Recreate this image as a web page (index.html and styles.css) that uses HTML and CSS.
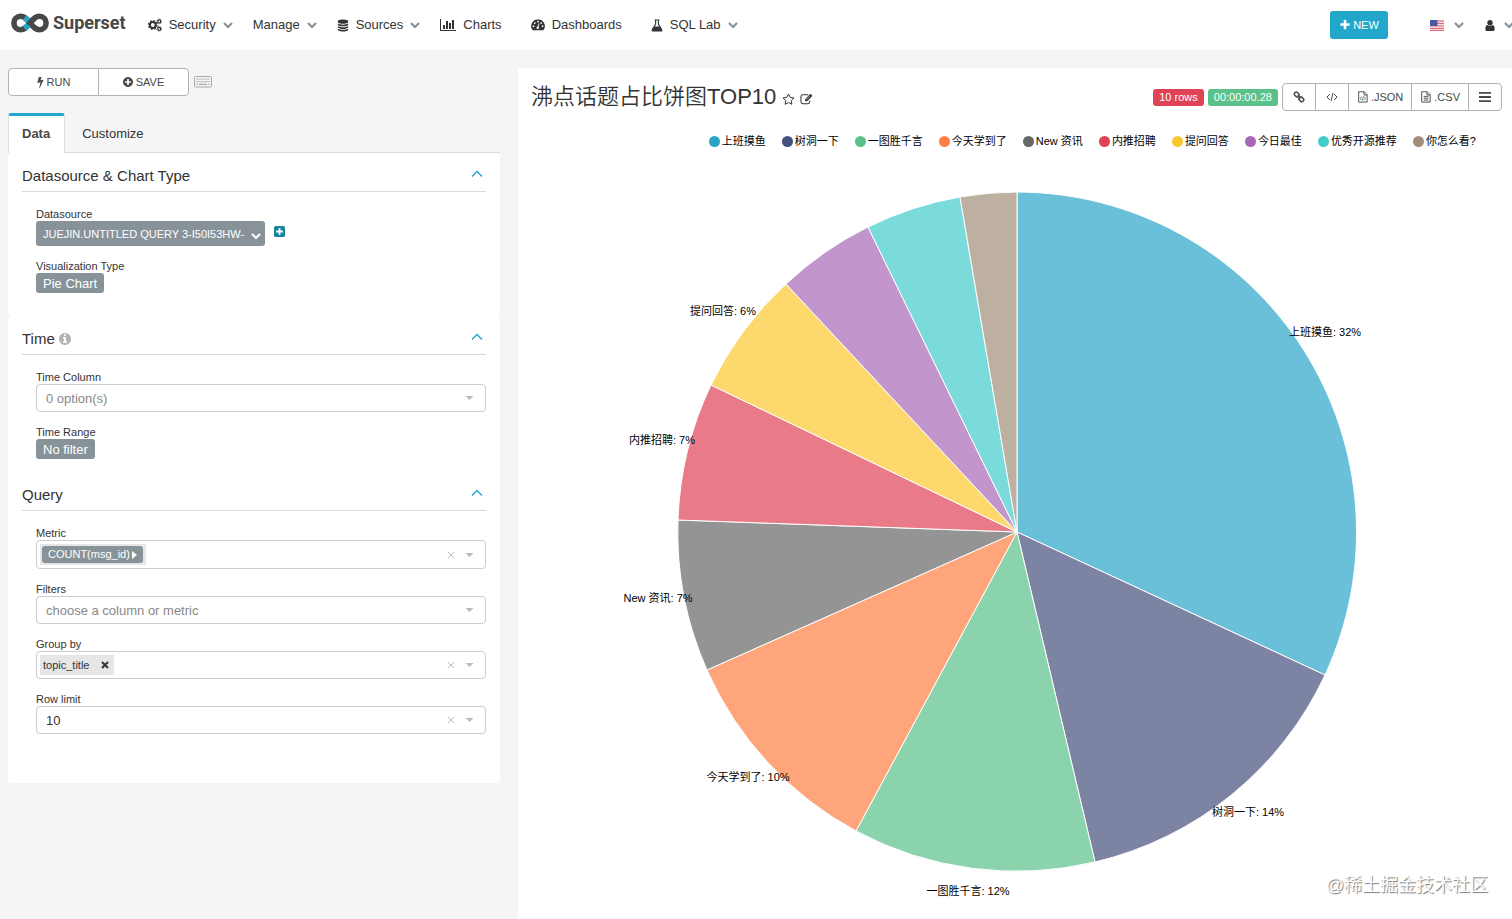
FILE: index.html
```html
<!DOCTYPE html>
<html lang="en">
<head>
  <meta charset="UTF-8" />
  <meta name="viewport" content="width=device-width, initial-scale=1.0" />
  <title>沸点话题占比饼图TOP10 - Superset</title>
  <link rel="stylesheet" href="styles.css">
</head>
<body>
  <!-- icon sprite -->
  <svg class="sprite" aria-hidden="true">
    <symbol id="chevron-down" viewBox="0 0 10 8"><path d="M1 2L5 6L9 2" fill="none" stroke="currentColor" stroke-width="2.2"/></symbol>
    <symbol id="chevron-up" viewBox="0 0 12 8"><path d="M1 6.5L6 1.5L11 6.5" fill="none" stroke="currentColor" stroke-width="1.4"/></symbol>
    <symbol id="caret" viewBox="0 0 8 4"><path d="M0 0H8L4 4Z"/></symbol>
    <symbol id="clear" viewBox="0 0 8 8"><path d="M1 1L7 7M7 1L1 7" fill="none" stroke="currentColor"/></symbol>
    <symbol id="database" viewBox="0 0 1792 1792"><path d="M896 768q237 0 443-43t325-127v170q0 69-103 128t-280 93.5-385 34.5-385-34.5-280-93.5-103-128v-170q119 84 325 127t443 43zm0 768q237 0 443-43t325-127v170q0 69-103 128t-280 93.5-385 34.5-385-34.5-280-93.5-103-128v-170q119 84 325 127t443 43zm0-384q237 0 443-43t325-127v170q0 69-103 128t-280 93.5-385 34.5-385-34.5-280-93.5-103-128v-170q119 84 325 127t443 43zm0-1152q208 0 385 34.5t280 93.5 103 128v128q0 69-103 128t-280 93.5-385 34.5-385-34.5-280-93.5-103-128v-128q0-69 103-128t280-93.5 385-34.5z"/></symbol>
    <symbol id="bar-chart" viewBox="0 0 2048 1792"><path d="M640 896v512h-256v-512h256zm384-512v1024h-256v-1024h256zm1024 1152v128h-2048v-1536h128v1408h1920zm-640-896v768h-256v-768h256zm384-384v1152h-256v-1152h256z"/></symbol>
    <symbol id="cogs" viewBox="0 0 14 14">
      <g fill="none" stroke="currentColor">
        <circle cx="4.8" cy="7" r="2.9" stroke-width="2"/>
        <circle cx="4.8" cy="7" r="4.3" stroke-width="1.3" stroke-dasharray="1.7 1.68"/>
        <circle cx="11.2" cy="3.4" r="1.5" stroke-width="1.2"/>
        <circle cx="11.2" cy="3.4" r="2.4" stroke-width="0.9" stroke-dasharray="1 0.88"/>
        <circle cx="11.2" cy="10.8" r="1.5" stroke-width="1.2"/>
        <circle cx="11.2" cy="10.8" r="2.4" stroke-width="0.9" stroke-dasharray="1 0.88"/>
      </g>
    </symbol>
    <symbol id="dashboard" viewBox="0 0 14 12">
      <path d="M7 0.5A6.6 6.6 0 0 0 1.3 10.8Q1.5 11.2 2 11.2H12Q12.5 11.2 12.7 10.8A6.6 6.6 0 0 0 7 0.5Z"/>
      <g fill="#fff"><circle cx="2.5" cy="7.2" r="0.9"/><circle cx="3.8" cy="4.1" r="0.9"/><circle cx="7" cy="2.7" r="0.9"/><circle cx="10.2" cy="4.1" r="0.9"/><circle cx="11.5" cy="7.2" r="0.9"/><circle cx="6.8" cy="8.7" r="1.3"/></g>
      <path d="M6.9 8.5L8 4.5" stroke="#fff" stroke-width="0.9"/>
    </symbol>
    <symbol id="flask" viewBox="0 0 12 13">
      <path d="M3.5 1H8.5M4.6 1V5L1.3 10.6Q0.7 12 2 12H10Q11.3 12 10.7 10.6L7.4 5V1" fill="none" stroke="currentColor" stroke-width="1.1"/>
      <path d="M3.4 7.5H8.6L11 12H1Z"/>
    </symbol>
    <symbol id="plus" viewBox="0 0 1792 1792"><path d="M1600 736v192q0 40-28 68t-68 28h-416v416q0 40-28 68t-68 28h-192q-40 0-68-28t-28-68v-416h-416q-40 0-68-28t-28-68v-192q0-40 28-68t68-28h416v-416q0-40 28-68t68-28h192q40 0 68 28t28 68v416h416q40 0 68 28t28 68z"/></symbol>
    <symbol id="user" viewBox="128 0 1536 1792"><path d="M1536 1399q0 109-62.5 187t-150.5 78h-854q-88 0-150.5-78t-62.5-187q0-85 8.5-160.5t31.5-152 58.5-131 94-89 134.5-34.5q131 128 313 128t313-128q76 0 134.5 34.5t94 89 58.5 131 31.5 152 8.5 160.5zm-256-887q0 159-112.5 271.5t-271.5 112.5-271.5-112.5-112.5-271.5 112.5-271.5 271.5-112.5 271.5 112.5 112.5 271.5z"/></symbol>
    <symbol id="bolt" viewBox="400 160 1000 1620"><path d="M1333 566q18 20 7 44l-540 1157q-13 25-42 25-4 0-14-2-17-5-25.5-19t-4.5-30l197-808-406 101q-4 1-12 1-18 0-31-11-18-15-13-39l201-825q4-14 16-23t28-9h328q19 0 32 12.5t13 29.5q0 8-5 18l-171 463 396-98q8-2 12-2 19 0 34 15z"/></symbol>
    <symbol id="plus-circle" viewBox="128 128 1536 1536"><path d="M1344 960v-128q0-26-19-45t-45-19h-256v-256q0-26-19-45t-45-19h-128q-26 0-45 19t-19 45v256h-256q-26 0-45 19t-19 45v128q0 26 19 45t45 19h256v256q0 26 19 45t45 19h128q26 0 45-19t19-45v-256h256q26 0 45-19t19-45zm320-64q0 209-103 385.5t-279.5 279.5-385.5 103-385.5-103-279.5-279.5-103-385.5 103-385.5 279.5-279.5 385.5-103 385.5 103 279.5 279.5 103 385.5z"/></symbol>
    <symbol id="info-circle" viewBox="128 128 1536 1536"><path d="M1152 1376v-160q0-14-9-23t-23-9h-96v-512q0-14-9-23t-23-9h-320q-14 0-23 9t-9 23v160q0 14 9 23t23 9h96v320h-96q-14 0-23 9t-9 23v160q0 14 9 23t23 9h448q14 0 23-9t9-23zm-128-896v-160q0-14-9-23t-23-9h-192q-14 0-23 9t-9 23v160q0 14 9 23t23 9h192q14 0 23-9t9-23zm640 416q0 209-103 385.5t-279.5 279.5-385.5 103-385.5-103-279.5-279.5-103-385.5 103-385.5 279.5-279.5 385.5-103 385.5 103 279.5 279.5 103 385.5z"/></symbol>
    <symbol id="keyboard" viewBox="0 0 18 12">
      <rect x="0.5" y="0.5" width="17" height="10.5" rx="1" fill="none" stroke="currentColor"/>
      <path d="M2.5 3.2H15.5M2.5 5.7H15.5" stroke="currentColor" stroke-width="1.2" stroke-dasharray="1.2 0.77"/>
      <path d="M2.5 8.3H3.7M5 8.3H13M14.3 8.3H15.5" stroke="currentColor" stroke-width="1.2"/>
    </symbol>
    <symbol id="star-o" viewBox="0 0 13 12"><path d="M6.5 1L8.2 4.4L12 5L9.2 7.6L9.9 11.3L6.5 9.5L3.1 11.3L3.8 7.6L1 5L4.8 4.4Z" fill="none" stroke="currentColor" stroke-linejoin="round"/></symbol>
    <symbol id="edit" viewBox="0 0 14 12">
      <path d="M9 1.5H3Q1 1.5 1 3.5V9Q1 11 3 11H8.5Q10.5 11 10.5 9V7.5" fill="none" stroke="currentColor" stroke-width="1.1"/>
      <path d="M5.5 8.5V6.2L10.8 0.9Q11.3 0.4 11.8 0.9L13 2.1Q13.5 2.6 13 3.1L7.7 8.5Z"/>
      <path d="M6.8 6.7L10.5 3" stroke="#fff" stroke-width="0.6"/>
    </symbol>
    <symbol id="link" viewBox="0 0 12 12"><g fill="none" stroke="currentColor" stroke-width="1.5"><rect x="1.2" y="1.6" width="5" height="3.8" rx="1.7" transform="rotate(45 3.7 3.5)"/><rect x="5.8" y="6.4" width="5" height="3.8" rx="1.7" transform="rotate(45 8.3 8.3)"/><path d="M4.5 4.5L7.5 7.5"/></g></symbol>
    <symbol id="code" viewBox="0 0 12 10"><path d="M3.8 2L1 5L3.8 8M8.2 2L11 5L8.2 8M7 1L5 9" fill="none" stroke="currentColor"/></symbol>
    <symbol id="file-code" viewBox="0 0 11 13"><g fill="none" stroke="currentColor"><path d="M0.8 0.8H6.8L10 4V12H0.8ZM6.5 1V4.3H10"/><path d="M4 6L2.6 8L4 10M6.8 6L8.2 8L6.8 10M5.9 5.8L4.9 10.3" stroke-width="0.8"/></g></symbol>
    <symbol id="file-text" viewBox="0 0 11 13"><path d="M0.8 0.8H6.8L10 4V12H0.8ZM6.5 1V4.3H10M3 5.8H8M3 7.8H8M3 9.8H8" fill="none" stroke="currentColor"/></symbol>
    <symbol id="bars" viewBox="0 0 10 9"><path d="M0 1H10M0 4.5H10M0 8H10" stroke="currentColor" stroke-width="1.5"/></symbol>
    <symbol id="plus-square" viewBox="0 0 11 11"><rect width="11" height="11" rx="1.5"/><path d="M5.5 2.2V8.8M2.2 5.5H8.8" stroke="#fff" stroke-width="1.8"/></symbol>
  </svg>

  <nav class="navbar">
    <a class="brand" href="#">
      <svg class="brand-logo" viewBox="0 0 38 20" aria-hidden="true">
        <g fill="none" stroke-width="5.6">
          <path d="M19 10C15 5.2 13 3.3 9.6 3.3A6.7 6.7 0 0 0 9.6 16.7C13 16.7 15 14.8 19 10" stroke="#484848"/>
          <path d="M19 10C23 14.8 25 16.7 28.4 16.7A6.7 6.7 0 0 0 28.4 3.3C25 3.3 23 5.2 19 10" stroke="#484848"/>
          <path d="M13.6 4.6Q15.500 6 18.500 9.500M13.600 15.400Q15 14.500 18 11" stroke="#20a7c9"/>
          <path d="M17.300 12L22.500 6" stroke="#484848"/>
        </g>
      </svg>
      <span>Superset</span>
    </a>
    <div class="nav-menu">
      <a class="nav-item" href="#"><svg class="icon-14"><use href="#cogs"/></svg>Security<svg class="chevron"><use href="#chevron-down"/></svg></a>
      <a class="nav-item" href="#">Manage<svg class="chevron"><use href="#chevron-down"/></svg></a>
      <a class="nav-item" href="#"><svg class="icon-12"><use href="#database"/></svg>Sources<svg class="chevron"><use href="#chevron-down"/></svg></a>
      <a class="nav-item plain" href="#"><svg class="icon-16"><use href="#bar-chart"/></svg>Charts</a>
      <a class="nav-item plain" href="#"><svg class="icon-14"><use href="#dashboard"/></svg>Dashboards</a>
      <a class="nav-item" href="#"><svg class="icon-12"><use href="#flask"/></svg>SQL Lab<svg class="chevron"><use href="#chevron-down"/></svg></a>
    </div>
    <div class="nav-right">
      <button class="btn-new" type="button"><svg><use href="#plus"/></svg>NEW</button>
      <a class="nav-item" href="#" aria-label="Language">
        <svg class="flag" viewBox="0 0 14 11">
          <rect width="14" height="11" rx="1" fill="#f3d9dc"/>
          <path d="M0 1H14M0 3.5H14M0 6H14M0 8.5H14M0 10.5H14" stroke="#dc6a78" stroke-width="1.2"/>
          <rect width="7.5" height="6" fill="#4b5aa5"/>
        </svg>
        <svg class="chevron"><use href="#chevron-down"/></svg>
      </a>
      <a class="nav-item user" href="#" aria-label="User"><svg class="icon-12"><use href="#user"/></svg><svg class="chevron"><use href="#chevron-down"/></svg></a>
    </div>
  </nav>

  <main class="explore">
    <aside class="sidebar">
      <div class="toolbar">
        <div class="btn-group">
          <button class="btn" type="button"><svg class="bolt"><use href="#bolt"/></svg>RUN</button>
          <button class="btn" type="button"><svg class="plus-circle"><use href="#plus-circle"/></svg>SAVE</button>
        </div>
        <svg class="keyboard"><use href="#keyboard"/></svg>
      </div>

      <div class="tabs" role="tablist">
        <button class="tab active" type="button" role="tab" aria-selected="true">Data</button>
        <button class="tab" type="button" role="tab" aria-selected="false">Customize</button>
      </div>

      <section class="panel datasource-panel">
        <h2 class="panel-title">Datasource &amp; Chart Type<svg><use href="#chevron-up"/></svg></h2>
        <div class="panel-body">
          <div class="field">
            <label for="datasource">Datasource</label>
            <div class="datasource-row">
              <button class="btn-datasource" id="datasource" type="button">JUEJIN.UNTITLED QUERY 3-I50I53HW-<svg class="chevron"><use href="#chevron-down"/></svg></button>
              <svg class="plus-square"><use href="#plus-square"/></svg>
            </div>
          </div>
          <div class="field">
            <label for="viz-type">Visualization Type</label>
            <button class="btn-label" id="viz-type" type="button">Pie Chart</button>
          </div>
        </div>
      </section>

      <section class="panel">
        <h2 class="panel-title"><span>Time <svg class="info"><use href="#info-circle"/></svg></span><svg><use href="#chevron-up"/></svg></h2>
        <div class="panel-body">
          <div class="field">
            <label for="time-column">Time Column</label>
            <div class="control">
              <select class="placeholder" id="time-column"><option>0 option(s)</option></select>
              <svg class="caret"><use href="#caret"/></svg>
            </div>
          </div>
          <div class="field">
            <label for="time-range">Time Range</label>
            <button class="btn-label" id="time-range" type="button">No filter</button>
          </div>
        </div>
      </section>

      <section class="panel query-panel">
        <h2 class="panel-title">Query<svg><use href="#chevron-up"/></svg></h2>
        <div class="panel-body">
          <div class="field">
            <label for="metric">Metric</label>
            <div class="control metric-control">
              <div class="metric-chip"><span>COUNT(msg_id)<i></i></span></div>
              <input id="metric" type="text">
              <button class="clear" type="button" aria-label="Clear metric"><svg><use href="#clear"/></svg></button>
              <svg class="caret"><use href="#caret"/></svg>
            </div>
          </div>
          <div class="field">
            <label for="filters">Filters</label>
            <div class="control">
              <select class="placeholder" id="filters"><option>choose a column or metric</option></select>
              <svg class="caret"><use href="#caret"/></svg>
            </div>
          </div>
          <div class="field">
            <label for="group-by">Group by</label>
            <div class="control">
              <div class="chip">topic_title<button type="button" aria-label="Remove topic_title"><svg><use href="#clear"/></svg></button></div>
              <input id="group-by" type="text">
              <button class="clear" type="button" aria-label="Clear group by"><svg><use href="#clear"/></svg></button>
              <svg class="caret"><use href="#caret"/></svg>
            </div>
          </div>
          <div class="field">
            <label for="row-limit">Row limit</label>
            <div class="control">
              <select id="row-limit"><option>10</option></select>
              <button class="clear" type="button" aria-label="Clear row limit"><svg><use href="#clear"/></svg></button>
              <svg class="caret"><use href="#caret"/></svg>
            </div>
          </div>
        </div>
      </section>
    </aside>

    <section class="chart-panel">
      <header class="chart-header">
        <h1>沸点话题占比饼图TOP10</h1>
        <svg class="title-icon"><use href="#star-o"/></svg>
        <svg class="title-icon"><use href="#edit"/></svg>
        <div class="chart-actions">
          <span class="badge rows">10 rows</span>
          <span class="badge timer">00:00:00.28</span>
          <div class="btn-group">
            <button class="btn icon-only" type="button" aria-label="Copy link"><svg><use href="#link"/></svg></button>
            <button class="btn icon-only" type="button" aria-label="Embed"><svg><use href="#code"/></svg></button>
            <button class="btn" type="button"><svg><use href="#file-code"/></svg>.JSON</button>
            <button class="btn" type="button"><svg><use href="#file-text"/></svg>.CSV</button>
            <button class="btn icon-only" type="button" aria-label="More"><svg><use href="#bars"/></svg></button>
          </div>
        </div>
      </header>

      <ul class="legend">
        <li class="c1">上班摸鱼</li>
        <li class="c2">树洞一下</li>
        <li class="c3">一图胜千言</li>
        <li class="c4">今天学到了</li>
        <li class="c5">New 资讯</li>
        <li class="c6">内推招聘</li>
        <li class="c7">提问回答</li>
        <li class="c8">今日最佳</li>
        <li class="c9">优秀开源推荐</li>
        <li class="c10">你怎么看?</li>
      </ul>

      <svg class="pie" viewBox="0 0 994 763">
        <g class="slices">
          <path class="c1" d="M499 376L499 36A340 340 0 0 1 807 519Z"/>
          <path class="c2" d="M499 376L807 519A340 340 0 0 1 577 706Z"/>
          <path class="c3" d="M499 376L577 706A340 340 0 0 1 338 675Z"/>
          <path class="c4" d="M499 376L338 675A340 340 0 0 1 189 514Z"/>
          <path class="c5" d="M499 376L189 514A340 340 0 0 1 160 364Z"/>
          <path class="c6" d="M499 376L160 364A340 340 0 0 1 193 229Z"/>
          <path class="c7" d="M499 376L193 229A340 340 0 0 1 268 128Z"/>
          <path class="c8" d="M499 376L268 128A340 340 0 0 1 350 71Z"/>
          <path class="c9" d="M499 376L350 71A340 340 0 0 1 442 41Z"/>
          <path class="c10" d="M499 376L442 41A340 340 0 0 1 499 36Z"/>
        </g>
        <g class="slice-labels">
          <text x="807" y="180">上班摸鱼: 32%</text>
          <text x="730" y="660">树洞一下: 14%</text>
          <text x="450" y="739">一图胜千言: 12%</text>
          <text x="230" y="625">今天学到了: 10%</text>
          <text x="140" y="446">New 资讯: 7%</text>
          <text x="144" y="288">内推招聘: 7%</text>
          <text x="205" y="159">提问回答: 6%</text>
        </g>
      </svg>
      <div class="watermark">@稀土掘金技术社区</div>
    </section>
  </main>
</body>
</html>
```
FILE: styles.css
```css
* {
  box-sizing: border-box;
}

body {
  margin: 0;
  background: #f5f5f5;
  color: #333;
  font-family: "Liberation Sans", "Noto Sans CJK SC", sans-serif;
  font-size: 13px;
  line-height: 20px;
}

svg {
  display: block;
  flex: none;
  fill: currentColor;
}

button,
input,
select {
  font-family: inherit;
  color: inherit;
  padding: 0;
  margin: 0;
  border: none;
  background: none;
}

a {
  color: inherit;
  text-decoration: none;
}

.sprite {
  position: absolute;
  width: 0;
  height: 0;
}

/* navbar */
.navbar {
  display: flex;
  align-items: center;
  height: 50px;
  padding-left: 11px;
  background: #fff;
  overflow: hidden;
}

.brand {
  display: flex;
  align-items: center;
  gap: 4px;
  padding-bottom: 5px;
  color: #484848;
  font-family: Roboto, sans-serif;
  font-size: 18px;
  font-weight: 700;
}

.brand-logo {
  width: 38px;
  height: 20px;
}

.nav-menu {
  display: flex;
  gap: 20px;
  margin-left: 22px;
}

.nav-item {
  display: flex;
  align-items: center;
  gap: 7px;
}

.nav-item.plain {
  padding-right: 9px;
}

.chevron {
  width: 10px;
  height: 8px;
  color: #879399;
}

.icon-12 {
  width: 12px;
  height: 13px;
}

.icon-14 {
  width: 14px;
  height: 14px;
}

.icon-16 {
  width: 16px;
  height: 14px;
}

.nav-right {
  display: flex;
  align-items: center;
  gap: 20px;
  margin-left: auto;
  margin-right: -2px;
}

.nav-right .nav-item {
  gap: 10px;
}

.nav-right .nav-item.user {
  gap: 8px;
}

.flag {
  width: 14px;
  height: 11px;
}

.btn-new {
  display: flex;
  align-items: center;
  justify-content: center;
  gap: 2px;
  width: 58px;
  height: 28px;
  margin-right: 22px;
  border-radius: 3px;
  background: #20a7c9;
  color: #fff;
  font-size: 11px;
}

.btn-new svg {
  width: 12px;
  height: 12px;
}

/* layout */
.explore {
  display: flex;
  align-items: flex-start;
  gap: 18px;
  padding: 18px 0 0 8px;
}

.sidebar {
  flex: 0 0 492px;
}

.chart-panel {
  position: relative;
  flex: 1;
  min-width: 0;
  background: #fff;
}

/* buttons */
.btn-group {
  display: flex;
}

.btn {
  display: flex;
  align-items: center;
  justify-content: center;
  gap: 2px;
  height: 28px;
  padding: 0 8px;
  margin-left: -1px;
  border: 1px solid #b3b3b3;
  background: #fff;
  color: #484848;
  font-size: 11px;
}

.btn:first-child {
  margin-left: 0;
  border-radius: 4px 0 0 4px;
}

.btn:last-child {
  border-radius: 0 4px 4px 0;
}

.btn.icon-only {
  width: 34px;
}

.toolbar {
  display: flex;
  align-items: center;
  gap: 5px;
}

.toolbar .btn {
  gap: 3px;
  width: 91px;
}

.bolt {
  width: 7px;
  height: 11px;
}

.plus-circle {
  width: 10px;
  height: 10px;
}

.keyboard {
  width: 18px;
  height: 12px;
  color: #aaa;
}

/* tabs */
.tabs {
  display: flex;
  margin-top: 17px;
  border-bottom: 1px solid #ddd;
}

.tab {
  height: 40px;
  margin-bottom: -1px;
  padding: 0 17px;
  font-size: 13px;
  color: #333;
}

.tab.active {
  padding: 0 14px 2px 13px;
  border: 1px solid #ddd;
  border-top: 3px solid #20a7c9;
  border-bottom: none;
  border-radius: 3px 3px 0 0;
  background: #fff;
  color: #484848;
  font-weight: bold;
}

/* control panels */
.panel {
  padding: 13px 14px;
  border-radius: 4px;
  background: #fff;
}

.datasource-panel {
  padding-bottom: 23px;
}

.query-panel {
  padding-bottom: 49px;
}

.panel-title {
  display: flex;
  align-items: center;
  justify-content: space-between;
  margin: 0;
  padding-bottom: 5px;
  border-bottom: 1px solid #d9d9d9;
  font-size: 15px;
  font-weight: normal;
}

.panel-title > svg {
  width: 12px;
  height: 8px;
  margin: 0 3px 4px 0;
  color: #20a7c9;
}

.panel-title span {
  display: flex;
  align-items: center;
  gap: 4px;
}

.info {
  width: 12px;
  height: 12px;
  color: #b3b3b3;
}

.panel-body {
  display: flex;
  flex-direction: column;
  gap: 13px;
  padding: 15px 0 0 14px;
}

.field label {
  display: block;
  font-size: 11px;
  line-height: 14px;
}

.datasource-row {
  display: flex;
  gap: 9px;
}

.btn-datasource {
  display: flex;
  align-items: center;
  gap: 7px;
  height: 25px;
  padding: 0 4px 0 7px;
  border-radius: 3px;
  background: #879399;
  color: #fff;
  font-size: 11px;
}

.btn-datasource .chevron {
  margin-top: 5px;
  color: #fff;
}

.plus-square {
  width: 11px;
  height: 11px;
  margin-top: 5px;
  color: #1a85a0;
}

.btn-label {
  display: block;
  height: 20px;
  padding: 0 7px;
  border-radius: 3px;
  background: #879399;
  color: #fff;
  font-size: 13px;
}

.control {
  display: flex;
  align-items: center;
  height: 28px;
  padding: 0 11px 0 3px;
  border: 1px solid #ccc;
  border-radius: 4px;
  background: #fff;
}

.metric-control {
  height: 29px;
}

.control select,
.control input {
  flex: 1;
  min-width: 0;
  height: 20px;
  outline: none;
  appearance: none;
  font-size: 13px;
}

.control select {
  padding-left: 6px;
}

.control select.placeholder {
  color: #888;
}

.caret {
  width: 9px;
  height: 4px;
  color: #bbb;
}

.clear {
  margin-right: 10px;
  color: #bbb;
}

.clear svg {
  width: 8px;
  height: 8px;
}

.metric-chip {
  padding: 2px 3px 2px 2px;
  background: #e6e6e6;
}

.metric-chip span {
  display: flex;
  align-items: center;
  gap: 2px;
  padding: 0 6px;
  border-radius: 3px;
  background: #879399;
  color: #fff;
  font-size: 11px;
  line-height: 17px;
}

.metric-chip i {
  border: 4px solid transparent;
  border-left: 5px solid #fff;
  border-right: none;
}

.chip {
  display: flex;
  align-items: center;
  gap: 12px;
  padding: 0 5px 0 3px;
  background: #e6e6e6;
  font-size: 11px;
}

.chip svg {
  width: 8px;
  height: 8px;
  stroke-width: 2;
}

/* chart */
.chart-header {
  display: flex;
  align-items: center;
  height: 58px;
  padding: 0 10px 0 13px;
}

.chart-header h1 {
  margin: 0 6px 0 0;
  font-size: 22px;
  font-weight: 350;
  line-height: 30px;
}

.title-icon {
  width: 13px;
  height: 12px;
  margin: 4px 5px 0 0;
}

.chart-actions {
  display: flex;
  align-items: center;
  gap: 4px;
  margin-left: auto;
}

.badge {
  padding: 0 6px;
  border-radius: 3px;
  color: #fff;
  font-size: 11px;
  line-height: 17px;
}

.badge.rows {
  background: #e04355;
}

.badge.timer {
  background: #5ac189;
}

.chart-actions .btn svg {
  width: 12px;
  height: 12px;
}

.legend {
  display: flex;
  justify-content: flex-end;
  gap: 16px;
  margin: 0;
  padding: 5px 36px 5px 0;
  list-style: none;
  color: #000;
  font-size: 11px;
}

.legend li {
  display: flex;
  align-items: center;
  gap: 2px;
}

.legend li::before {
  content: "";
  width: 11px;
  height: 11px;
  border-radius: 50%;
  background: var(--color);
}

.pie {
  width: 100%;
  height: auto;
}

.slices path {
  fill: var(--color);
  fill-opacity: 0.7;
  stroke: #fff;
}

.slice-labels {
  fill: #000;
  font-size: 11px;
  text-anchor: middle;
}

.c1 { --color: #2aa5c7; }
.c2 { --color: #454e7c; }
.c3 { --color: #5ac189; }
.c4 { --color: #ff7f44; }
.c5 { --color: #666666; }
.c6 { --color: #e04355; }
.c7 { --color: #fcc72d; }
.c8 { --color: #a868b7; }
.c9 { --color: #43cccb; }
.c10 { --color: #a38f79; }

.watermark {
  position: absolute;
  right: 24px;
  bottom: 19px;
  color: #fff;
  font-size: 18px;
  line-height: 30px;
  text-shadow: 1px 1px 1px #777;
}
```
